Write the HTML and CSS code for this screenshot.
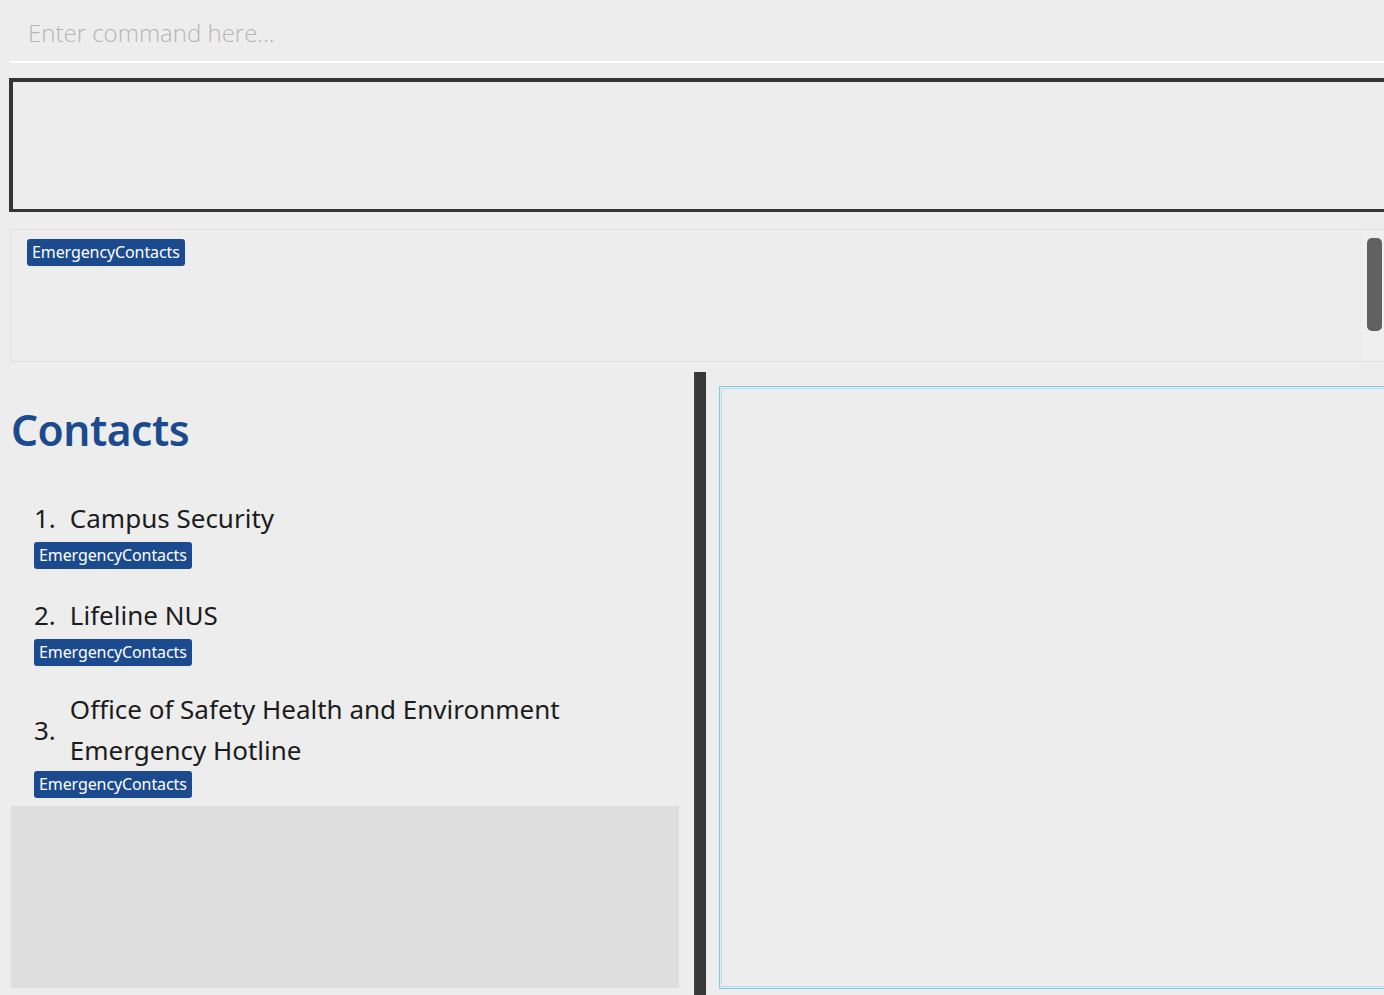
FILE: index.html
```html
<!DOCTYPE html>
<html>
<head>
<meta charset="utf-8">
<link rel="stylesheet" href="styles.css">
</head>
<body>
<div class="app">
  <div class="command">
    <input class="command-input" type="text" placeholder="Enter command here...">
  </div>
  <div class="result"></div>
  <div class="tag-panel">
    <div class="tag-area">
      <span class="tag">EmergencyContacts</span>
    </div>
    <div class="scroll-track"><div class="scroll-thumb"></div></div>
  </div>
  <div class="main">
    <div class="left">
      <h1 class="title">Contacts</h1>
      <div class="list">
        <div class="cell">
          <div class="row"><span class="num">1.</span><span class="name">Campus Security</span></div>
          <div class="tags"><span class="tag">EmergencyContacts</span></div>
        </div>
        <div class="cell">
          <div class="row"><span class="num">2.</span><span class="name">Lifeline NUS</span></div>
          <div class="tags"><span class="tag">EmergencyContacts</span></div>
        </div>
        <div class="cell">
          <div class="row"><span class="num">3.</span><span class="name">Office of Safety Health and Environment Emergency Hotline</span></div>
          <div class="tags"><span class="tag">EmergencyContacts</span></div>
        </div>
        <div class="empty"></div>
      </div>
    </div>
    <div class="divider"></div>
    <div class="right">
      <div class="detail"></div>
    </div>
  </div>
</div>
</body>
</html>
```
FILE: styles.css
```css
html, body {
  margin: 0;
  padding: 0;
  background: #ededed;
  overflow: hidden;
}
body {
  font-family: "Noto Sans", "Open Sans", sans-serif;
  width: 1384px;
  height: 995px;
}
.app {
  display: flex;
  flex-direction: column;
  height: 995px;
  padding-left: 10px;
}
.command {
  height: 61px;
  border-bottom: 2px solid #ffffff;
  display: flex;
  align-items: center;
}
.command-input {
  border: none;
  outline: none;
  background: transparent;
  font-family: "Open Sans", sans-serif;
  font-weight: 300;
  font-size: 24px;
  padding: 0 0 0 18px;
  width: 100%;
  margin-top: 4px;
  color: #333;
}
.command-input::placeholder {
  color: #b5b5b5;
}
.result {
  margin-top: 15px;
  margin-left: -1px;
  margin-right: -10px;
  height: 127px;
  border: 4px solid #353535;
  border-right: none;
  border-bottom-width: 3px;
}
.tag-panel {
  margin-top: 17px;
  height: 131px;
  border: 1px solid #e1e1e1;
  border-right: none;
  display: flex;
}
.tag-area {
  flex: 1;
  padding: 9px 16px;
}
.scroll-track {
  width: 22px;
  background: #efefef;
  padding-top: 8px;
}
.scroll-thumb {
  width: 15px;
  margin-left: 5px;
  height: 93px;
  background: #616161;
  border-radius: 5px;
}
.tag {
  display: inline-block;
  background: #1b4a8e;
  color: #ffffff;
  font-family: "Noto Sans", sans-serif;
  font-size: 16px;
  line-height: 27px;
  height: 27px;
  padding: 0 5px;
  border-radius: 3px;
  letter-spacing: -0.1px;
}
.main {
  flex: 1;
  display: flex;
  min-height: 0;
}
.left {
  width: 668px;
  display: flex;
  flex-direction: column;
  padding-left: 1px;
  padding-right: 1px;
  padding-bottom: 7px;
}
.title {
  margin: 38px 0 0 0;
  font-size: 42.5px;
  font-weight: 600;
  color: #1b4a8e;
  line-height: 60px;
  letter-spacing: -0.5px;
}
.list {
  margin-top: 20px;
  flex: 1;
  display: flex;
  flex-direction: column;
}
.cell {
  padding: 15px 0 8px 23px;
}
.row {
  display: flex;
  align-items: center;
  min-height: 47px;
  color: #1c1c1c;
  font-size: 26px;
  line-height: 41px;
}
.num {
  flex: none;
  margin-right: 14px;
}
.name {
  max-width: 540px;
}
.tags {
  display: flex;
}
.empty {
  flex: 1;
  background: #dedede;
}
.divider {
  width: 12px;
  margin-left: 14px;
  margin-top: 10px;
  background: #383838;
  border-left: 1px solid #444;
  box-sizing: border-box;
}
.right {
  flex: 1;
  padding: 24px 0 6px 13px;
  margin-right: -10px;
  display: flex;
}
.detail {
  flex: 1;
  border: 1px solid #7fcbe6;
  border-right: none;
  box-shadow: inset 1px 1px 0 #ededed, inset 2px 2px 0 #b3def0, inset 0 -1px 0 #ededed, inset 0 -2px 0 #b3def0;
}
```
